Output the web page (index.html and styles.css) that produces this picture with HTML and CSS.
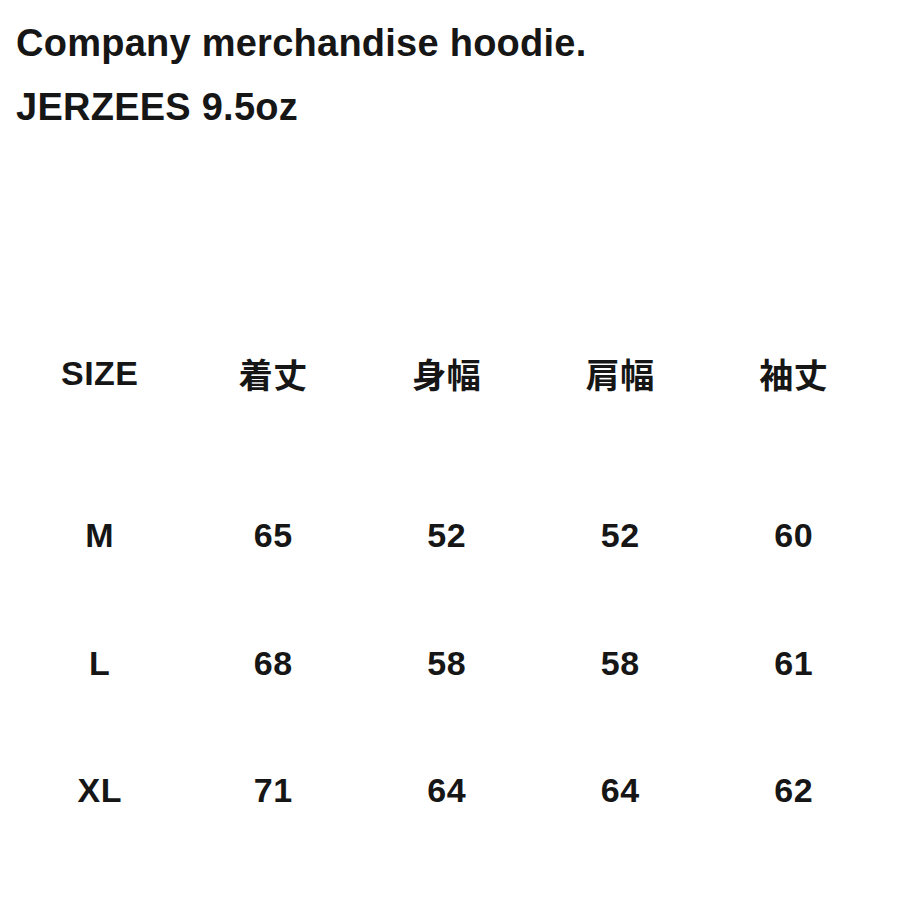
FILE: index.html
```html
<!DOCTYPE html>
<html lang="ja">
<head>
<meta charset="utf-8">
<title>Company merchandise hoodie</title>
<link rel="stylesheet" href="styles.css">
</head>
<body>
<div class="intro">
  <p class="line">Company merchandise hoodie.</p>
  <p class="line">JERZEES 9.5oz</p>
</div>
<div class="table">
  <div class="row head">
    <div class="cell">SIZE</div>
    <div class="cell">着丈</div>
    <div class="cell">身幅</div>
    <div class="cell">肩幅</div>
    <div class="cell">袖丈</div>
  </div>
  <div class="row">
    <div class="cell">M</div>
    <div class="cell">65</div>
    <div class="cell">52</div>
    <div class="cell">52</div>
    <div class="cell">60</div>
  </div>
  <div class="row">
    <div class="cell">L</div>
    <div class="cell">68</div>
    <div class="cell">58</div>
    <div class="cell">58</div>
    <div class="cell">61</div>
  </div>
  <div class="row">
    <div class="cell">XL</div>
    <div class="cell">71</div>
    <div class="cell">64</div>
    <div class="cell">64</div>
    <div class="cell">62</div>
  </div>
</div>
</body>
</html>
```
FILE: styles.css
```css
html, body {
  margin: 0;
  padding: 0;
  background: #ffffff;
}
body {
  width: 900px;
  height: 900px;
  overflow: hidden;
  color: #161616;
  font-family: "Liberation Sans", "Noto Sans CJK JP", sans-serif;
  font-weight: bold;
}
.intro {
  padding: 11px 0 0 16px;
}
.line {
  margin: 0;
  font-size: 38px;
  line-height: 64px;
  letter-spacing: 0.25px;
}
.table {
  margin-top: 170px;
  padding-left: 13px;
  font-size: 34px;
  letter-spacing: 0.5px;
}
.row {
  display: flex;
  height: 127.5px;
  align-items: center;
}
.row.head {
  height: 128px;
  margin-bottom: 35px;
}
.cell {
  width: 173.5px;
  text-align: center;
}
```
